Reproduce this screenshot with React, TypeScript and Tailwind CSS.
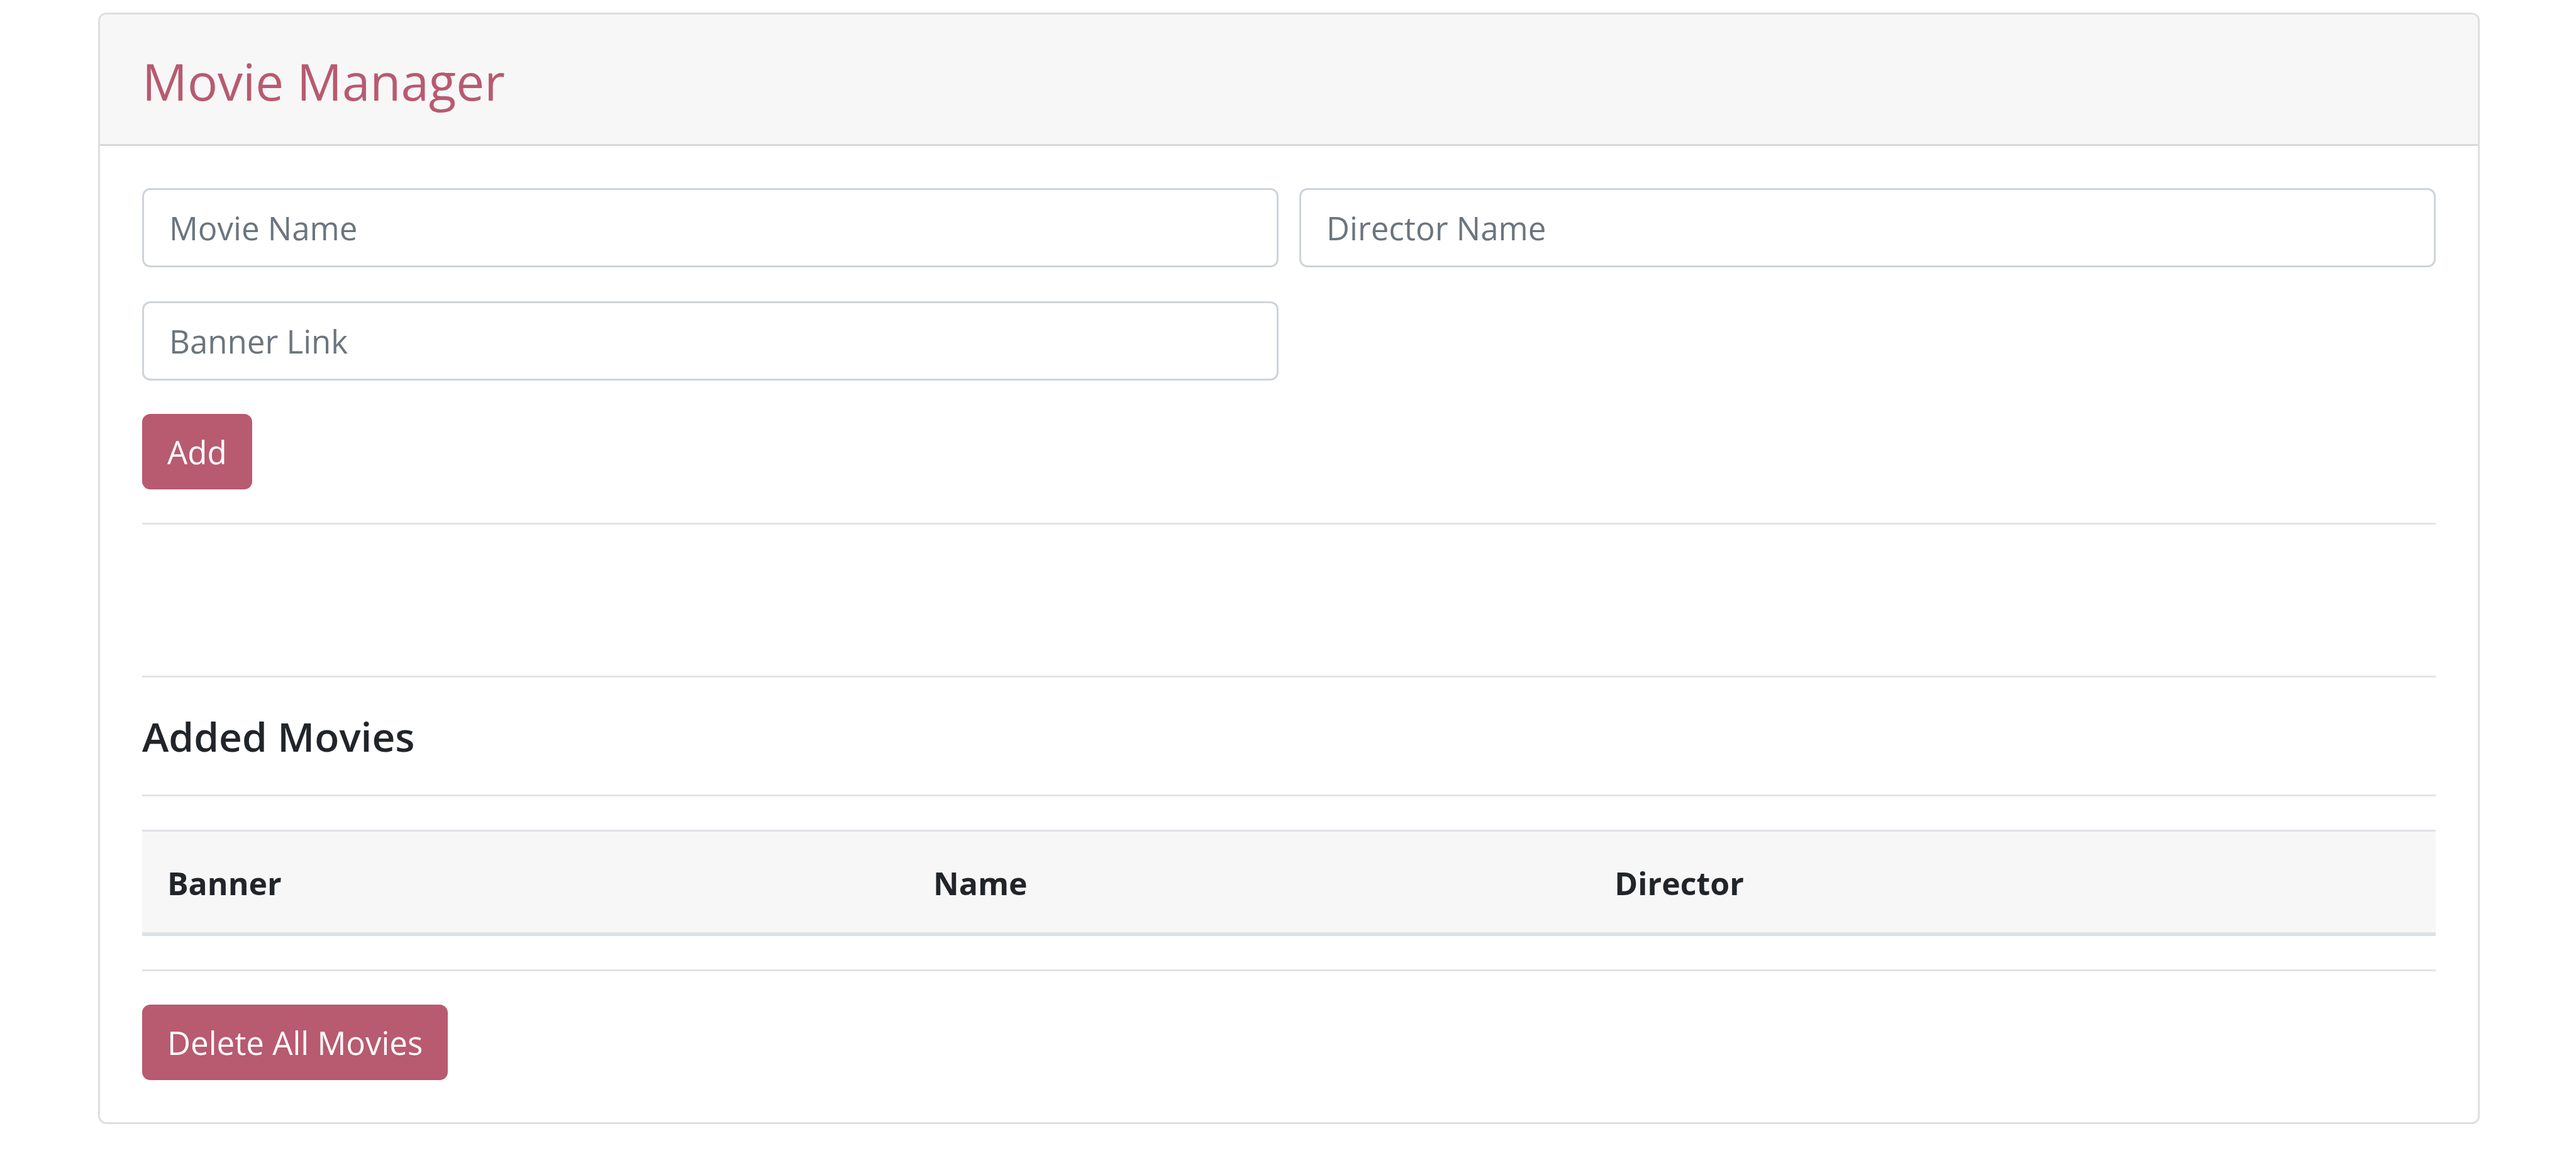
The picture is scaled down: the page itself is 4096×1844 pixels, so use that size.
import { useState } from "react";
import type { FormEvent } from "react";

type Movie = { name: string; director: string; banner: string };

const emptyMovie: Movie = { name: "", director: "", banner: "" };

const fields: { key: keyof Movie; label: string }[] = [
  { key: "name", label: "Movie Name" },
  { key: "director", label: "Director Name" },
  { key: "banner", label: "Banner Link" },
];

function Divider() {
  return <hr className="border-t-3 border-[#e4e4e4]" />;
}

function Button({ type, label, onClick }: { type: "button" | "submit"; label: string; onClick?: () => void }) {
  return (
    <button
      type={type}
      onClick={onClick}
      className="block cursor-pointer rounded-[13px] bg-[#b85a70] px-10 py-5 text-[51px] leading-20 text-white"
    >
      {label}
    </button>
  );
}

export default function App() {
  const [draft, setDraft] = useState<Movie>(emptyMovie);
  const [movies, setMovies] = useState<Movie[]>([]);

  const addMovie = (event: FormEvent) => {
    event.preventDefault();
    setMovies([...movies, draft]);
    setDraft(emptyMovie);
  };

  return (
    <div className="min-h-screen bg-white pt-5 pr-[153px] pl-[156px] font-['Open_Sans',sans-serif] text-[#212529]">
      <main className="overflow-hidden rounded-[13px] border-3 border-[#dfdfdf]">
        <header className="border-b-3 border-[#d8d8d8] bg-[#f7f7f7] px-[67px] pt-[56px] pb-[50px]">
          <h1 className="text-[80px] leading-[100px] text-[#b85a70]">Movie Manager</h1>
        </header>

        <div className="p-[67px]">
          <form onSubmit={addMovie}>
            <div className="grid grid-cols-2 gap-x-[33px] gap-y-[54px]">
              {fields.map(({ key, label }) => (
                <input
                  key={key}
                  type="text"
                  aria-label={label}
                  placeholder={label}
                  value={draft[key]}
                  onChange={(event) => setDraft({ ...draft, [key]: event.target.value })}
                  className="w-full rounded-[13px] border-3 border-[#ced4da] bg-white px-10 py-5 text-[51px] leading-20 placeholder:text-[#6c757d]"
                />
              ))}
            </div>
            <div className="py-[53px]">
              <Button type="submit" label="Add" />
            </div>
          </form>

          <Divider />
          <div className="h-60" />
          <Divider />
          <h2 className="pt-[54px] pb-[52px] text-[64px] leading-20 font-semibold">Added Movies</h2>
          <Divider />

          <table className="my-[53px] w-full border-collapse text-left text-[50px] leading-20">
            <thead>
              <tr className="border-t-3 border-b-6 border-[#dee2e6] bg-[#f7f7f7]">
                <th className="w-[33.4%] px-10 pt-[42px] pb-[38px] font-bold">Banner</th>
                <th className="w-[29.7%] px-10 pt-[42px] pb-[38px] font-bold">Name</th>
                <th className="px-10 pt-[42px] pb-[38px] font-bold">Director</th>
              </tr>
            </thead>
            <tbody>
              {movies.map((movie, index) => (
                <tr key={index} className="border-t-3 border-[#dee2e6]">
                  <td className="px-10 py-10">{movie.banner}</td>
                  <td className="px-10 py-10">{movie.name}</td>
                  <td className="px-10 py-10">{movie.director}</td>
                </tr>
              ))}
            </tbody>
          </table>

          <Divider />
          <div className="pt-[53px]">
            <Button type="button" label="Delete All Movies" onClick={() => setMovies([])} />
          </div>
        </div>
      </main>
    </div>
  );
}
